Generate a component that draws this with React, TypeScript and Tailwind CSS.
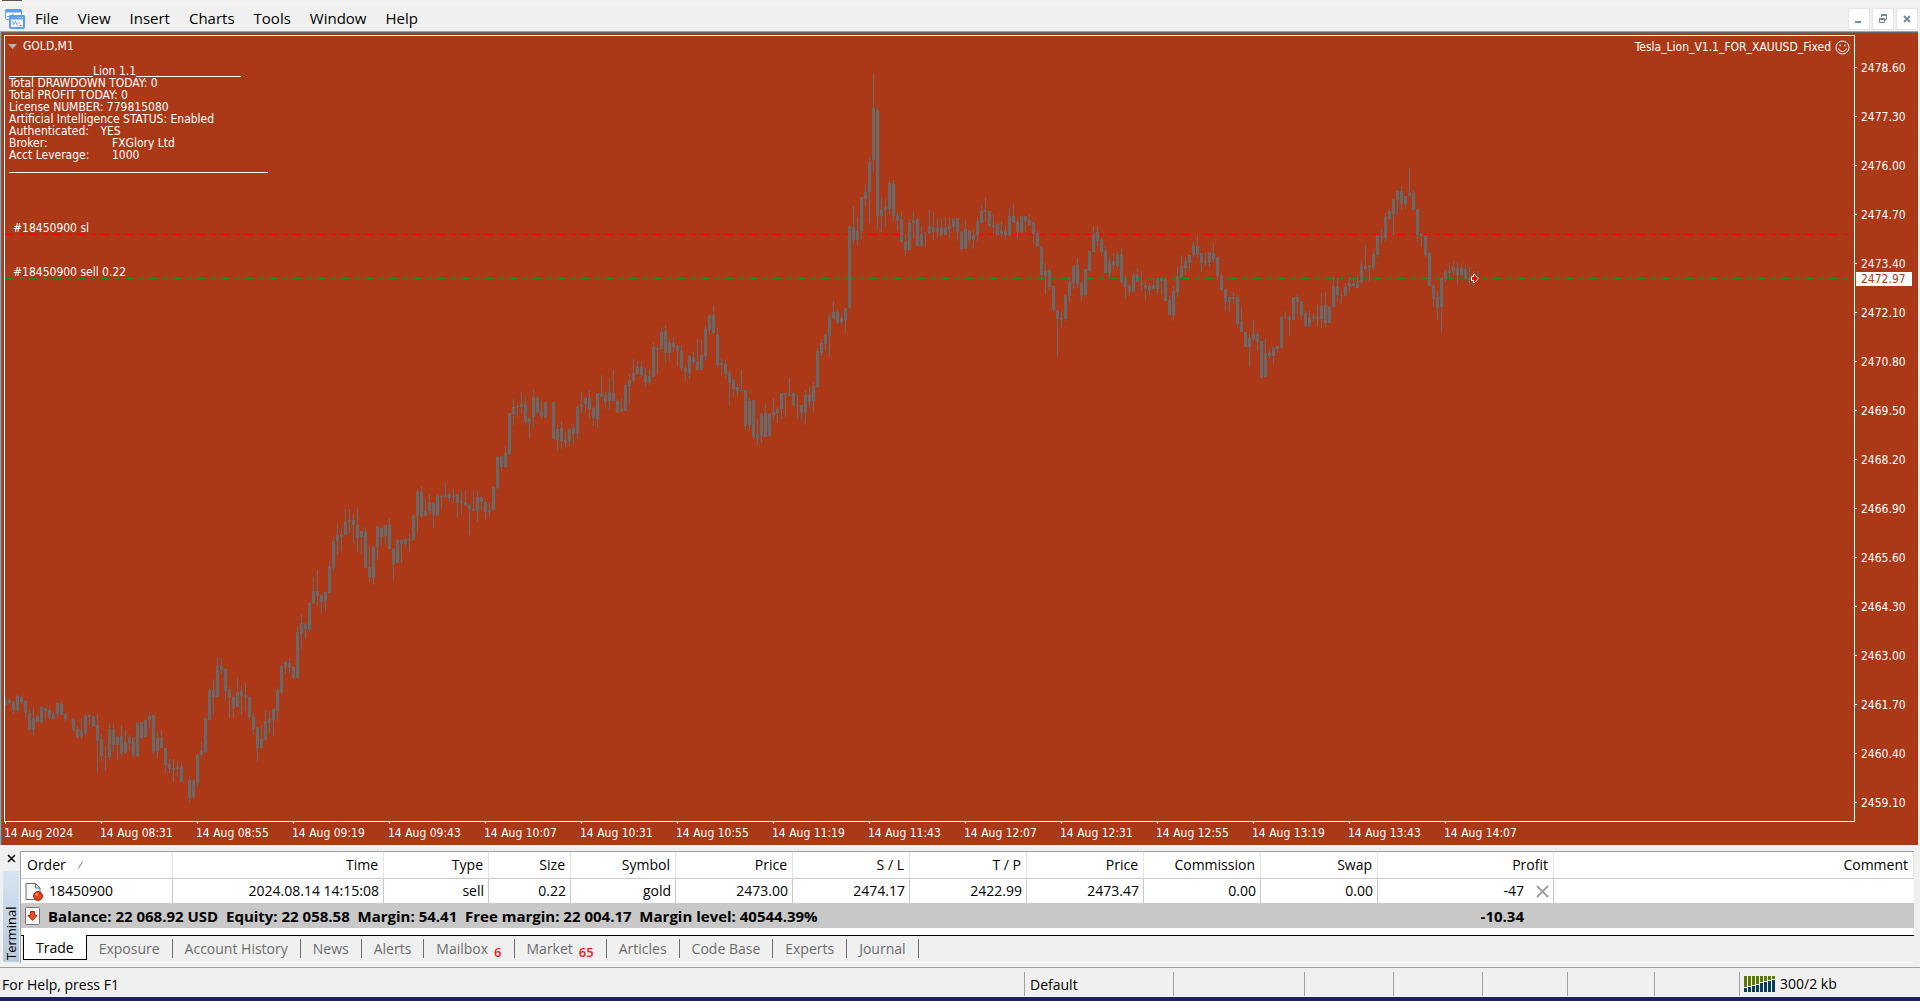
import { useState } from "react";

// A bar is [high, bodyTop, bodyBottom, low], null is a minute without a bar
type Bar = [number, number, number, number] | null;

interface BarBlock {
  top: number;
  bars: Bar[];
}

const BAR_STEP = 4;

const blocks: BarBlock[] = [
  {
    top: 524,
    bars: [
      [136, 140, 145, 145], [138, 140, 143, 144], [141, 142, 150, 154], [134, 136, 150, 153], [136, 137, 142, 144],
      [140, 141, 153, 157], [149, 153, 170, 170], [148, 158, 170, 176], [154, 156, 162, 162], [146, 147, 162, 164],
      [147, 148, 151, 159], [146, 150, 158, 160], [152, 154, 159, 160], [143, 143, 154, 157], [141, 144, 155, 155],
      [153, 154, 159, 162], null, [158, 159, 170, 172], [166, 169, 177, 179], [158, 171, 176, 179],
      [153, 156, 173, 174], [155, 155, 157, 165], [156, 156, 167, 167], [155, 165, 181, 212], [174, 179, 196, 201],
      [187, 196, 197, 211], [164, 169, 197, 200], [164, 170, 185, 192], [176, 177, 185, 200], [165, 176, 193, 196],
      [170, 182, 193, 193], [175, 178, 183, 190], [178, 178, 195, 198], [162, 163, 196, 197], [162, 162, 178, 179],
      [160, 160, 177, 177], [152, 156, 160, 168], [155, 155, 192, 194], [172, 178, 191, 198], [171, 178, 188, 188],
      [188, 188, 205, 213], [199, 204, 209, 213], [199, 208, 210, 222], [201, 207, 209, 217], [202, 207, 222, 222],
      null, [216, 220, 238, 243], [219, 221, 237, 240], [193, 195, 223, 227], [181, 190, 195, 198],
      [158, 158, 192, 193], [128, 130, 160, 160], [119, 130, 137, 155], [97, 106, 137, 137], [98, 106, 110, 114],
      [108, 109, 131, 141], [127, 130, 137, 158], [136, 137, 148, 157], [117, 132, 147, 147], [126, 131, 136, 155],
      [123, 135, 137, 151], [136, 137, 157, 160], [153, 157, 169, 175], [167, 167, 188, 202], [166, 179, 188, 189],
      [150, 161, 180, 180], [151, 159, 163, 173], [148, 149, 160, 176], [127, 130, 151, 161], [105, 106, 132, 134],
      [101, 102, 107, 114], [98, 103, 108, 114], [107, 107, 118, 120], [67, 72, 118, 118], [54, 63, 74, 89],
      [63, 64, 69, 79], [42, 43, 70, 72], [17, 31, 43, 44], [10, 31, 36, 46], [35, 35, 42, 53],
      [32, 32, 41, 51],
    ],
  },
  {
    top: 344,
    bars: [
      [181, 186, 213, 213], [157, 161, 188, 191], [144, 155, 161, 175], [148, 154, 157, 171], [129, 142, 155, 155],
      [129, 140, 142, 154], [134, 140, 145, 163], [128, 145, 158, 172], [151, 151, 157, 174], [147, 152, 188, 188],
      [166, 187, 197, 202], [165, 167, 198, 205], [146, 146, 167, 180], [148, 148, 157, 166], [145, 145, 156, 164],
      [138, 145, 169, 169], [168, 169, 184, 200], [159, 160, 183, 183], [159, 160, 164, 183], [158, 159, 164, 168],
      [153, 159, 160, 172], [134, 136, 160, 160], [109, 112, 136, 152], [106, 112, 136, 138], [119, 131, 136, 136],
      [114, 123, 131, 134], [122, 123, 135, 148], [114, 116, 135, 135], [115, 116, 118, 128], [103, 115, 117, 118],
      [112, 114, 118, 122], [109, 116, 117, 123], [114, 114, 123, 137], [110, 121, 123, 134], [110, 122, 125, 126],
      [124, 125, 129, 155], [110, 129, 131, 131], [111, 117, 131, 142], [116, 117, 122, 130], [121, 122, 132, 139],
      [123, 130, 132, 136], [106, 107, 130, 131], [76, 77, 108, 109], [76, 76, 87, 91], [66, 73, 87, 88],
      [33, 33, 74, 75], [19, 27, 34, 45], [23, 26, 27, 37], [12, 24, 27, 33], [16, 24, 42, 45],
      [38, 38, 42, 59], [9, 17, 37, 48], [16, 18, 33, 33], [21, 31, 36, 39], [22, 22, 37, 39],
      null, [22, 22, 59, 59], [45, 49, 60, 71], [41, 48, 61, 69], [52, 60, 63, 67],
      [48, 49, 61, 66], [44, 48, 54, 64], [25, 27, 53, 59], [12, 24, 27, 33], [16, 18, 24, 33],
      [10, 18, 29, 39], [27, 28, 38, 46], [13, 13, 39, 48],
    ],
  },
  {
    top: 264,
    bars: [
      [75, 93, 97, 97], [92, 95, 102, 109], [79, 92, 101, 110], [70, 93, 101, 101], [99, 101, 112, 113],
      [98, 109, 111, 112], [84, 85, 111, 111], [74, 80, 86, 104], [59, 73, 80, 82], [61, 67, 74, 74],
      [61, 67, 75, 77], [68, 75, 82, 87], [69, 76, 82, 85], [42, 47, 77, 77], [46, 48, 50, 73],
      [27, 32, 49, 49], [25, 31, 53, 63], [39, 43, 53, 61], [37, 43, 47, 52], [45, 46, 51, 66],
      [45, 51, 68, 71], [65, 68, 72, 81], [55, 56, 73, 79], [52, 57, 62, 65], [39, 62, 70, 70],
      [40, 55, 70, 70], [25, 29, 56, 60], [14, 16, 30, 34], [5, 15, 33, 34], [28, 34, 65, 68],
      [58, 63, 65, 76], [60, 64, 74, 79], [70, 73, 83, 106], [79, 80, 89, 97],
    ],
  },
  {
    top: 184,
    bars: [
      [164, 167, 171, 176], [150, 170, 171, 171], [170, 170, 206, 210], [178, 181, 205, 211], [180, 180, 217, 219],
      [199, 214, 218, 225], [192, 194, 216, 223], [184, 193, 217, 217], [193, 194, 216, 216], [178, 192, 195, 200],
      [187, 189, 193, 203], [173, 173, 189, 199], [173, 173, 175, 197], [158, 174, 176, 176], [172, 173, 185, 187],
      [175, 185, 186, 199], [185, 185, 193, 200], [170, 175, 193, 205], [167, 175, 182, 186], [162, 166, 181, 192],
      [128, 131, 167, 168], [119, 123, 133, 136], [113, 115, 124, 130], [94, 97, 116, 137],
    ],
  },
  {
    top: 24,
    bars: [
      [241, 252, 258, 259], [249, 252, 263, 264], [255, 258, 262, 265], [248, 248, 260, 273], [166, 166, 248, 248],
      [146, 167, 180, 184], [157, 171, 180, 186], [137, 137, 171, 179], [124, 132, 139, 146], [97, 102, 132, 163],
      [13, 48, 100, 112], [47, 50, 156, 169], [137, 150, 156, 172], [139, 147, 150, 167], [120, 123, 149, 154],
      [120, 124, 156, 161], [153, 156, 161, 171], [151, 159, 182, 183], [175, 182, 190, 196], [159, 163, 190, 190],
      [152, 160, 163, 178], [157, 159, 186, 186], [166, 174, 185, 187], [172, 173, 174, 187], [150, 166, 173, 174],
      [152, 167, 172, 180], [159, 168, 172, 178], [158, 168, 175, 177], [158, 168, 175, 175], [157, 166, 169, 178],
      [158, 159, 167, 172], [158, 158, 172, 181], [171, 172, 189, 191], [160, 169, 189, 189], [169, 171, 180, 184],
      [169, 175, 180, 189], [157, 161, 175, 182], [145, 151, 163, 164], [137, 150, 152, 161], [151, 151, 166, 167],
      [154, 165, 167, 175], [163, 164, 175, 175], [161, 170, 174, 177], [165, 171, 175, 180], [148, 156, 175, 177],
      [144, 156, 163, 163], [159, 162, 172, 179], [156, 156, 172, 173], [156, 156, 161, 172], [154, 160, 165, 165],
      [161, 163, 174, 183], [171, 173, 187, 187],
    ],
  },
  {
    top: 124,
    bars: [
      [86, 87, 115, 120], [103, 111, 116, 134], [109, 110, 127, 130], [126, 126, 150, 152], [150, 150, 159, 196],
      [151, 158, 160, 168], [134, 135, 159, 161], [118, 122, 136, 142], [106, 106, 123, 129], [98, 105, 124, 128],
      [121, 123, 136, 141], [109, 109, 135, 137], [90, 91, 111, 111], [66, 74, 92, 92], [67, 72, 81, 86],
      [78, 80, 92, 96], [86, 91, 113, 113], [98, 101, 113, 119], [93, 101, 105, 109], [92, 95, 106, 109],
      [88, 94, 122, 124], [115, 120, 127, 139], [124, 126, 132, 136], [111, 115, 132, 132], [108, 115, 122, 122],
      [111, 123, 125, 131], [122, 125, 129, 140], [123, 126, 130, 135], [118, 125, 129, 130], [118, 120, 129, 135],
      [117, 118, 121, 135], [117, 119, 141, 141], [136, 140, 155, 155], [126, 131, 155, 161], [107, 116, 132, 137],
      [95, 106, 117, 117], [97, 101, 108, 115], [95, 95, 103, 111], [82, 85, 95, 97], [74, 86, 94, 98],
      [93, 93, 103, 112], [93, 101, 103, 106], [92, 92, 102, 107], [83, 93, 99, 102], [97, 97, 116, 120],
      [114, 116, 130, 131], [129, 129, 142, 151], [137, 137, 142, 152], [132, 137, 139, 144], [135, 137, 164, 168],
      [148, 162, 172, 172], [172, 172, 187, 187], [174, 178, 187, 207], [160, 174, 179, 181], [171, 174, 182, 191],
      [181, 181, 217, 219], [178, 193, 217, 217], [188, 193, 196, 198], [187, 187, 196, 204], [186, 186, 189, 193],
      [156, 157, 188, 188], [151, 157, 158, 159], [155, 157, 160, 176], [137, 137, 160, 160], [134, 137, 142, 154],
      [141, 141, 155, 160], [151, 153, 166, 167], [150, 158, 166, 167], [154, 157, 158, 161], [145, 157, 159, 166],
      [133, 146, 159, 168], [132, 145, 163, 167], [146, 147, 163, 163], [116, 126, 147, 147], [118, 126, 135, 141],
      [132, 135, 136, 144], [123, 127, 136, 136], [117, 123, 127, 132], [118, 123, 126, 126], [115, 121, 128, 128],
      [100, 106, 122, 124], [85, 106, 109, 110], [105, 105, 108, 122], [91, 94, 108, 109], [75, 75, 95, 97],
      [69, 76, 78, 84], [53, 57, 78, 82], [48, 51, 59, 60], [39, 39, 54, 75], [30, 31, 40, 55],
      [26, 31, 44, 50], [36, 36, 44, 49], [8, 33, 36, 36], [30, 33, 50, 50], [49, 49, 75, 82],
      [73, 74, 76, 87], [75, 76, 95, 97], [92, 93, 126, 126], [124, 126, 139, 147], [131, 137, 148, 160],
      [117, 118, 147, 172], [110, 112, 119, 122], [103, 111, 113, 117], [101, 107, 111, 115], [102, 108, 115, 124],
      [104, 108, 115, 116], [106, 109, 119, 119], [107, 118, 120, 125], [111, 118, 119, 126], [111, 118, 119, 120],
    ],
  },
];

const candles = blocks.flatMap((block) =>
  block.bars.map((bar) => (bar ? bar.map((y) => y + block.top) : null))
);

const menu = ["File", "View", "Insert", "Charts", "Tools", "Window", "Help"];

const prices = [
  "2478.60", "2477.30", "2476.00", "2474.70", "2473.40", "2472.10", "2470.80", "2469.50",
  "2468.20", "2466.90", "2465.60", "2464.30", "2463.00", "2461.70", "2460.40", "2459.10",
];

const times = [
  "14 Aug 2024", "14 Aug 08:31", "14 Aug 08:55", "14 Aug 09:19", "14 Aug 09:43", "14 Aug 10:07",
  "14 Aug 10:31", "14 Aug 10:55", "14 Aug 11:19", "14 Aug 11:43", "14 Aug 12:07", "14 Aug 12:31",
  "14 Aug 12:55", "14 Aug 13:19", "14 Aug 13:43", "14 Aug 14:07",
];

const columns = [
  { label: "Time", value: "2024.08.14 14:15:08" },
  { label: "Type", value: "sell" },
  { label: "Size", value: "0.22" },
  { label: "Symbol", value: "gold" },
  { label: "Price", value: "2473.00" },
  { label: "S / L", value: "2474.17" },
  { label: "T / P", value: "2422.99" },
  { label: "Price", value: "2473.47" },
  { label: "Commission", value: "0.00" },
  { label: "Swap", value: "0.00" },
];

const tabs: { label: string; count?: number }[] = [
  { label: "Trade" },
  { label: "Exposure" },
  { label: "Account History" },
  { label: "News" },
  { label: "Alerts" },
  { label: "Mailbox", count: 6 },
  { label: "Market", count: 65 },
  { label: "Articles" },
  { label: "Code Base" },
  { label: "Experts" },
  { label: "Journal" },
];

function AppLogo() {
  return (
    <svg width="22" height="22" viewBox="0 0 22 22" fill="none" aria-hidden="true">
      <rect x="1.5" y="1.5" width="16" height="10" rx="1" fill="#fff" stroke="#5e9cf2" />
      <path d="M1 4.500V2.500L2.500 1H16.500L18 2.500V4.500Z" fill="#5e9cf2" />
      <path d="M3 8.500h2M8.500 5.500v2" stroke="#5e9cf2" />
      <rect x="6" y="8" width="14" height="12" rx="1" fill="#fff" stroke="#5e9cf2" strokeWidth="2" />
      <path d="M5 11.500V8.500L6.500 7H19.500L21 8.500V11.500Z" fill="#5e9cf2" />
      <path d="M13 9.500h1M15.500 9.500h1M18 9.500h1" stroke="#fff" />
      <path d="M8.500 13.500l1 3 2-3 2 4M15 14v2M16 17.500h2" stroke="#5e9cf2" />
    </svg>
  );
}

function WindowButtons() {
  const box = "flex size-[22px] items-center justify-center border border-[#e5e5e5] bg-white";
  return (
    <div className="flex gap-[2px]">
      <button aria-label="Minimize" className={box}>
        <svg width="12" height="12" viewBox="0 0 12 12">
          <path d="M2 8h6v2H2z" fill="#7b8794" />
        </svg>
      </button>
      <button aria-label="Restore" className={box}>
        <svg width="12" height="12" viewBox="0 0 12 12" fill="none" stroke="#7b8794">
          <path d="M4.500 4V2.500h5v4H8" />
          <path d="M4 2h6" strokeWidth="2" />
          <path d="M2.500 6h5v3.500h-5z" />
          <path d="M2 6h6" strokeWidth="2" />
        </svg>
      </button>
      <button aria-label="Close" className={box}>
        <svg width="12" height="12" viewBox="0 0 12 12" stroke="#7b8794" strokeWidth="2">
          <path d="M3 3l6 6M9 3l-6 6" />
        </svg>
      </button>
    </div>
  );
}

function PriceBars() {
  return (
    <svg className="block h-[785px] w-full" shapeRendering="crispEdges" aria-hidden="true">
      <line x1="0" y1="198.5" x2="100%" y2="198.5" stroke="#ff0000" strokeDasharray="9 6 3 6" />
      <line x1="0" y1="242.5" x2="100%" y2="242.5" stroke="#1e8f1e" strokeDasharray="9 6 3 6" />
      {candles.map((c, i) => {
        if (!c) return null;
        const x = i * BAR_STEP;
        return (
          <g key={i} fill="#696969">
            <rect x={x} y={c[0]} width="1" height={c[3] - c[0]} />
            <rect x={x - 1} y={c[1]} width="3" height={c[2] - c[1]} />
          </g>
        );
      })}
      <path
        d="M1466.500 240.500h2v-2h1l4 4-4 4h-1v-2h-2z"
        fill="#f00"
        stroke="#fff"
        shapeRendering="auto"
      />
    </svg>
  );
}

function ExpertComment() {
  return (
    <div className="absolute top-[29px] left-1 leading-3">
      <div className="flex">
        <span className="w-[84px] border-b border-white" />
        <span>Lion 1.1</span>
        <span className="w-[105px] border-b border-white" />
      </div>
      <p>Total DRAWDOWN TODAY: 0</p>
      <p>Total PROFIT TODAY: 0</p>
      <p>License NUMBER: 779815080</p>
      <p>Artificial Intelligence STATUS: Enabled</p>
      <p>
        Authenticated: <span className="ml-2">YES</span>
      </p>
      <p className="flex">
        <span className="w-[103px]">Broker:</span>FXGlory Ltd
      </p>
      <p className="flex">
        <span className="w-[103px]">Acct Leverage:</span>1000
      </p>
      <div className="h-3 w-[259px] border-b border-white" />
    </div>
  );
}

function Chart() {
  return (
    <main className="mr-[2px] border-t border-l border-t-[#a0a0a0] border-l-[#a0a0a0]">
      <div className="border-t border-l border-[#696969] bg-[#ab3817] pt-[2px] pl-[2px] font-['DejaVu_Sans_Condensed','Noto_Sans',sans-serif] text-xs text-white">
        <div className="flex items-start">
          <div className="relative min-w-0 flex-1 border border-white">
            <PriceBars />
            <div className="absolute top-[2px] left-[3px] flex items-center gap-[6px]">
              <svg width="9" height="5" viewBox="0 0 9 5" aria-hidden="true">
                <path d="M0 0h9L4.500 5z" fill="#b5b5b5" />
              </svg>
              GOLD,M1
            </div>
            <div className="absolute top-[3px] right-1 flex items-center gap-1">
              Tesla_Lion_V1.1_FOR_XAUUSD_Fixed
              <svg width="15" height="15" viewBox="0 0 15 15" fill="none" stroke="#fff" aria-hidden="true">
                <circle cx="7.500" cy="7.500" r="6.500" />
                <path d="M3.500 8.500c1 4 7 4 8 0" />
                <path d="M4.500 5.500h1.500M9 5.500h1.500" strokeWidth="1.500" />
              </svg>
            </div>
            <ExpertComment />
            <div className="absolute top-[184px] left-2">#18450900 sl</div>
            <div className="absolute top-[228px] left-2">#18450900 sell 0.22</div>
          </div>
          <div className="relative -mb-2 w-[63px] pt-2">
            {prices.map((price) => (
              <div key={price} className="flex h-[49px] items-center gap-1">
                <span className="h-px w-[2px] bg-white" />
                {price}
              </div>
            ))}
            <div className="absolute top-[237px] left-px w-14 bg-white pl-[5px] leading-[14px] text-[#ab3817]">
              2472.97
            </div>
          </div>
        </div>
        <div className="flex h-[23px] overflow-hidden">
          {times.map((time) => (
            <div key={time} className="w-24 shrink-0">
              <div className="ml-px h-[2px] w-px bg-white" />
              <div className="pt-[1px] whitespace-nowrap">{time}</div>
            </div>
          ))}
        </div>
      </div>
    </main>
  );
}

function OrdersTable() {
  const head = "h-[27px] border-r border-b border-r-[#e5e5e5] border-b-[#c8c8c8] pr-[5px] font-normal";
  const cell = "h-6 border-r border-[#c8c8c8] pr-1";
  return (
    <table className="w-full table-fixed border-separate border-spacing-0 text-right leading-5">
      <colgroup>
        <col className="w-[152px]" />
        <col className="w-[211px]" />
        <col className="w-[105px]" />
        <col className="w-[82px]" />
        <col className="w-[105px]" />
        <col className="w-[117px]" />
        <col className="w-[117px]" />
        <col className="w-[117px]" />
        <col className="w-[117px]" />
        <col className="w-[117px]" />
        <col className="w-[117px]" />
        <col className="w-[176px]" />
        <col />
      </colgroup>
      <thead>
        <tr>
          <th className={`${head} pl-[6px] text-left`}>
            <span className="flex items-center gap-3">
              Order
              <svg width="5" height="8" viewBox="0 0 5 8" stroke="#808080" aria-hidden="true">
                <path d="M.5 7.500L4.500.5" />
              </svg>
            </span>
          </th>
          {columns.map((col, i) => (
            <th key={i} className={head}>{col.label}</th>
          ))}
          <th className={head}>Profit</th>
          <th className={head}>Comment</th>
        </tr>
      </thead>
      <tbody>
        <tr>
          <td className={cell}>
            <span className="flex items-center gap-[6px] pl-1">
              <svg width="18" height="19" viewBox="0 0 18 19" aria-hidden="true">
                <path d="M1 1.500h9.500L15 6v11.500H1z" fill="#f7f7f7" stroke="#6b6b6b" strokeLinejoin="round" />
                <path d="M10.500 1.500V6H15z" fill="#fff" stroke="#6b6b6b" strokeLinejoin="round" />
                <circle cx="13" cy="14" r="4.500" fill="#e0401a" stroke="#a82a0c" />
                <circle cx="11.800" cy="12.500" r="1.500" fill="#f58a63" />
              </svg>
              18450900
            </span>
          </td>
          {columns.map((col, i) => (
            <td key={i} className={cell}>{col.value}</td>
          ))}
          <td className={cell}>
            <span className="flex items-center justify-end gap-3">
              -47
              <button aria-label="Close order">
                <svg width="13" height="13" viewBox="0 0 13 13" stroke="#a0a0a0" strokeWidth="2">
                  <path d="M1 1l11 11M12 1L1 12" />
                </svg>
              </button>
            </span>
          </td>
          <td />
        </tr>
        <tr className="bg-[#c8c8c8] text-[15px] font-bold">
          <td colSpan={11} className="h-[25px] text-left">
            <span className="flex items-center gap-2 pl-1 whitespace-pre">
              <svg width="15" height="18" viewBox="0 0 15 18" aria-hidden="true">
                <rect x=".5" y=".5" width="14" height="17" rx="1" fill="#f7f7f7" stroke="#777" />
                <path d="M5.500 4.500h4v4h2.500L7.500 13.500 3 8.500h2.500z" fill="#e8501f" stroke="#a82a0c" />
              </svg>
              {"Balance: 22 068.92 USD  Equity: 22 058.58  Margin: 54.41  Free margin: 22 004.17  Margin level: 40544.39%"}
            </span>
          </td>
          <td className="pr-[30px]">-10.34</td>
          <td />
        </tr>
      </tbody>
    </table>
  );
}

function Terminal() {
  const [active, setActive] = useState("Trade");

  return (
    <section className="mt-px flex border-t border-white pt-1">
      <div className="flex w-5 flex-col items-center gap-2 pt-[3px] pb-px pl-[2px]">
        <button aria-label="Close terminal">
          <svg width="9" height="9" viewBox="0 0 9 9" stroke="#000" strokeWidth="1.500">
            <path d="M1 1l7 7M8 1L1 8" />
          </svg>
        </button>
        <div className="flex flex-1 rotate-180 items-center bg-linear-to-t from-[#d6e4f2] to-[#b8c9dc] pt-[2px] text-[13px] leading-4 [writing-mode:vertical-rl]">
          Terminal
        </div>
      </div>
      <div className="mr-[6px] min-w-0 flex-1 border-t border-l border-[#a0a0a0]">
        <div className="bg-white pb-[7px]">
          <OrdersTable />
        </div>
        <div role="tablist" className="flex h-7 border-t border-b border-t-black border-b-white pl-[2px]">
          {tabs.map(({ label, count }) =>
            label === active ? (
              <button
                key={label}
                role="tab"
                aria-selected
                onClick={() => setActive(label)}
                className="-mt-px h-[25px] border-r border-b border-l border-black bg-white px-3"
              >
                {label}
              </button>
            ) : (
              <button
                key={label}
                role="tab"
                aria-selected={false}
                onClick={() => setActive(label)}
                className="mt-[3px] h-[19px] border-r border-[#6d6d6d] px-3 leading-[17px] text-[#6d6d6d]"
              >
                {label}
                {count && <sub className="ml-[6px] text-[13px] font-semibold text-[#ed1c24]">{count}</sub>}
              </button>
            )
          )}
        </div>
      </div>
    </section>
  );
}

function StatusBar() {
  const cell = "mt-1 mb-px border-l border-[#a0a0a0]";
  return (
    <footer className="mt-1 flex h-[30px] border-t border-[#a0a0a0] leading-[26px]">
      <div className="mt-1 mb-px flex-1 pl-[2px]">For Help, press F1</div>
      <div className={`${cell} w-[149px] pl-[5px]`}>Default</div>
      <div className={`${cell} w-[131px]`} />
      <div className={`${cell} w-[89px]`} />
      <div className={`${cell} w-[89px]`} />
      <div className={`${cell} w-[85px]`} />
      <div className={`${cell} w-[87px]`} />
      <div className={`${cell} w-[85px]`} />
      <div className={`${cell} flex w-[181px] items-center gap-1 pl-1`}>
        <svg width="32" height="16" viewBox="0 0 32 16" shapeRendering="crispEdges" aria-hidden="true">
          {[11, 10, 9, 8, 6, 5, 4, 3].map((h, i) => (
            <g key={i}>
              <rect x={i * 4} y="0" width="3" height={h} fill="#5b7a08" />
              <rect x={i * 4} y={h + 1} width="3" height={15 - h} fill="#063f5c" />
            </g>
          ))}
        </svg>
        300/2 kb
      </div>
    </footer>
  );
}

export default function App() {
  return (
    <div className="flex min-h-screen flex-col bg-[#f0f0f0] font-['Open_Sans','Noto_Sans',sans-serif] text-[14px] text-black">
      <div className="h-[6px] bg-[#f3f3f3]">
        <div className="ml-[2px] h-px w-5 bg-[#5c5248]" />
      </div>
      <header className="flex h-[25px] items-center pr-[2px] pl-1">
        <AppLogo />
        <nav className="flex flex-1 gap-px text-[15px]">
          {menu.map((item) => (
            <button key={item} className="px-[9px]">{item}</button>
          ))}
        </nav>
        <WindowButtons />
      </header>
      <Chart />
      <Terminal />
      <StatusBar />
      <div className="min-h-1 flex-1 bg-[#1b1f5c]" />
    </div>
  );
}
